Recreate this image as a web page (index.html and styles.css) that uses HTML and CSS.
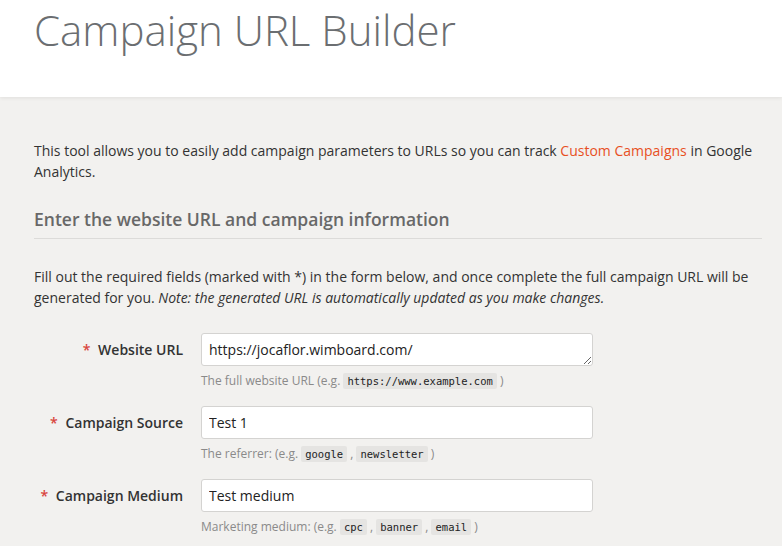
FILE: index.html
```html
<!DOCTYPE html>
<html lang="en">
<head>
  <meta charset="UTF-8">
  <meta name="viewport" content="width=device-width, initial-scale=1.0">
  <title>Campaign URL Builder</title>
  <link rel="stylesheet" href="styles.css">
</head>
<body>
  <header class="page-header">
    <h1>Campaign URL Builder</h1>
  </header>

  <main class="content">
    <p class="intro">This tool allows you to easily add campaign parameters to URLs so you can track <a href="#">Custom Campaigns</a> in Google Analytics.</p>

    <h2>Enter the website URL and campaign information</h2>

    <p class="intro">Fill out the required fields (marked with *) in the form below, and once complete the full campaign URL will be generated for you. <em>Note: the generated URL is automatically updated as you make changes.</em></p>

    <form class="builder">
      <div class="row">
        <label class="label" for="url"><span class="req">*</span> Website URL</label>
        <div class="field">
          <textarea id="url" class="input textarea" rows="1">https://jocaflor.wimboard.com/</textarea>
          <div class="help">The full website URL (e.g. <code>https://www.example.com</code> )</div>
        </div>
      </div>

      <div class="row">
        <label class="label" for="source"><span class="req">*</span> Campaign Source</label>
        <div class="field">
          <input id="source" class="input" type="text" value="Test 1">
          <div class="help">The referrer: (e.g. <code>google</code> , <code>newsletter</code> )</div>
        </div>
      </div>

      <div class="row">
        <label class="label" for="medium"><span class="req">*</span> Campaign Medium</label>
        <div class="field">
          <input id="medium" class="input" type="text" value="Test medium">
          <div class="help">Marketing medium: (e.g. <code>cpc</code> , <code>banner</code> , <code>email</code> )</div>
        </div>
      </div>
    </form>
  </main>
</body>
</html>
```

FILE: styles.css
```css
body {
  font-family: 'Open Sans', 'Noto Sans', sans-serif;
  margin: 0;
  background-color: #f2f1ef;
  color: #333;
  font-size: 14px;
  line-height: 21px;
}
.page-header {
  background-color: white;
  height: 97px;
  padding: 0 34px;
  box-shadow: 0 1px 4px rgba(0, 0, 0, 0.08);
  box-sizing: border-box;
}
h1 {
  margin: 0;
  padding-top: 4px;
  font-size: 42px;
  line-height: 52px;
  font-weight: 300;
  color: #6b6e71;
}
.content {
  padding: 43px 20px 0 34px;
}
.intro {
  margin: 0;
}
a {
  color: #e8501f;
  text-decoration: none;
}
h2 {
  margin: 22px 0 0;
  padding-bottom: 4px;
  font-size: 17.5px;
  line-height: 30px;
  font-weight: 600;
  color: #686868;
  border-bottom: 1px solid #dcdbd9;
}
h2 + .intro {
  margin-top: 27px;
}
.builder {
  margin-top: 25px;
}
.row {
  display: flex;
  align-items: flex-start;
  margin-bottom: 16px;
}
.label {
  width: 149px;
  text-align: right;
  font-weight: 600;
  padding-top: 6px;
  margin-right: 18px;
}
.req {
  color: #d9453d;
  margin-right: 4px;
}
.field {
  width: 392px;
}
.input {
  display: block;
  width: 100%;
  height: 33px;
  box-sizing: border-box;
  border: 1px solid #d4d3d1;
  border-radius: 3px;
  background: white;
  padding: 5px 7px;
  font-family: inherit;
  font-size: 14px;
  color: #222;
  margin: 0;
}
.textarea {
  resize: vertical;
  line-height: 21px;
}
.help {
  font-size: 12px;
  line-height: 18px;
  color: #8a8a8a;
  margin-top: 6px;
}
code {
  font-family: 'DejaVu Sans Mono', 'Liberation Mono', monospace;
  font-size: 10.5px;
  color: #222;
  background-color: #e5e4e2;
  border-radius: 2px;
  padding: 2px 4px;
}
```
